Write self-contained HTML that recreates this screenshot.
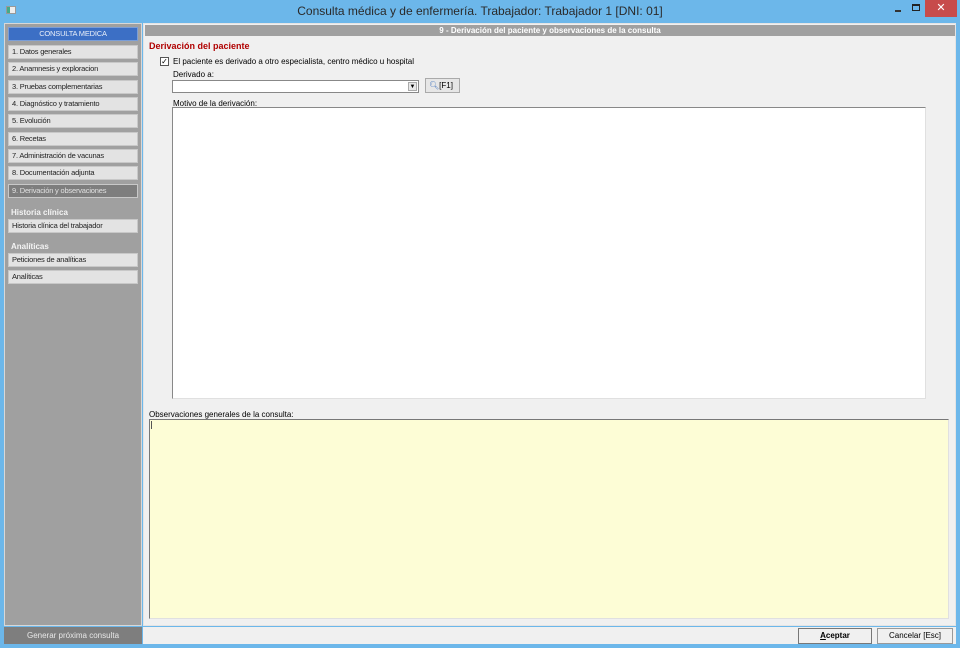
<!DOCTYPE html>
<html><head><meta charset="utf-8"><style>
*{margin:0;padding:0;box-sizing:border-box}
body{width:960px;height:648px;background:#6cb7ea;position:relative;overflow:hidden;font-family:"Liberation Sans",sans-serif;font-size:8px;color:#000}
.a{position:absolute}
.title{left:0;top:0;width:960px;height:22px;text-align:center;font-size:12px;line-height:22px;color:#2a2a2a}
.side{left:4px;top:23px;width:138px;height:603px;background:#a0a0a0;border:1px solid #d8d8d8}
.btn{position:absolute;left:3px;width:130px;height:14px;background:#e3e3e3;border:1px solid #c8c8c8;font-size:7.5px;line-height:12px;padding-left:3px;color:#222;letter-spacing:-0.2px}
.lbl{position:absolute;left:6px;font-size:8px;font-weight:bold;color:#f4f4f4}
.main{left:143px;top:23px;width:813px;height:603px;background:#f0f0f0;border:1px solid #e4e4e4}
</style></head><body>
<div class="a title">Consulta médica y de enfermería. Trabajador: Trabajador 1 [DNI: 01]</div>
<div class="a" style="left:6px;top:6px;width:10px;height:8px;background:#eee;border:1px solid #999"><div style="width:3px;height:6px;background:#4a8"></div></div>
<div class="a" style="left:895px;top:10px;width:6px;height:2px;background:#333"></div>
<div class="a" style="left:912px;top:4px;width:8px;height:7px;border:1px solid #222;border-top-width:2px"></div>
<div class="a" style="left:925px;top:0;width:32px;height:17px;background:#c74b4b;color:#fff;text-align:center;font-size:11px;line-height:16px">✕</div>

<div class="a side">
<div class="btn" style="top:3px;background:#3c6fc5;border-color:#7a9ed8;color:#e8eef8;text-align:center;padding:0">CONSULTA MEDICA</div>
<div class="btn" style="top:21px">1. Datos generales</div>
<div class="btn" style="top:38px">2. Anamnesis y exploracion</div>
<div class="btn" style="top:56px">3. Pruebas complementarias</div>
<div class="btn" style="top:73px">4. Diagnóstico y tratamiento</div>
<div class="btn" style="top:90px">5. Evolución</div>
<div class="btn" style="top:108px">6. Recetas</div>
<div class="btn" style="top:125px">7. Administración de vacunas</div>
<div class="btn" style="top:142px">8. Documentación adjunta</div>
<div class="btn" style="top:160px;background:#7e7e7e;border-color:#c8c8c8;color:#e0e0e0">9. Derivación y observaciones</div>
<div class="lbl" style="top:184px">Historia clínica</div>
<div class="btn" style="top:195px">Historia clínica del trabajador</div>
<div class="lbl" style="top:218px">Analíticas</div>
<div class="btn" style="top:229px">Peticiones de analíticas</div>
<div class="btn" style="top:246px">Analíticas</div>
</div>

<div class="a main">
<div class="a" style="left:1px;top:1px;width:810px;height:11px;background:#a0a0a0;color:#fff;font-weight:bold;text-align:center;font-size:8px;line-height:11px">9 - Derivación del paciente y observaciones de la consulta</div>
<div class="a" style="left:5px;top:17px;color:#b00000;font-weight:bold;font-size:9px">Derivación del paciente</div>
<div class="a" style="left:16px;top:33px;width:9px;height:9px;border:1px solid #555;background:#fff;font-size:8px;line-height:7px;text-align:center">✓</div>
<div class="a" style="left:29px;top:33px">El paciente es derivado a otro especialista, centro médico u hospital</div>
<div class="a" style="left:29px;top:46px">Derivado a:</div>
<div class="a" style="left:28px;top:56px;width:247px;height:13px;background:#fff;border:1px solid #888"><div class="a" style="right:1px;top:1px;width:9px;height:9px;background:#e8e8e8;border:1px solid #aaa;font-size:6px;line-height:8px;text-align:center">▼</div></div>
<div class="a" style="left:281px;top:54px;width:35px;height:15px;background:#e6e6e6;border:1px solid #aaa;line-height:13px;padding-left:3px"><span style="color:#4a7ac0">🔍︎</span>[F1]</div>
<div class="a" style="left:29px;top:75px">Motivo de la derivación:</div>
<div class="a" style="left:28px;top:83px;width:754px;height:292px;background:#fff;border-left:1px solid #888;border-top:1px solid #888;border-right:1px solid #e0e0e0;border-bottom:1px solid #e0e0e0"></div>
<div class="a" style="left:5px;top:386px">Observaciones generales de la consulta:</div>
<div class="a" style="left:5px;top:395px;width:800px;height:200px;background:#fdfdd6;border-left:1px solid #777;border-top:1px solid #777;border-right:1px solid #e0e0e0;border-bottom:1px solid #e0e0e0"><div class="a" style="left:1px;top:1px;width:1px;height:8px;background:#555"></div></div>
</div>
<div class="a" style="left:4px;top:627px;width:138px;height:17px;background:#7e7e7e;color:#e8e8e8;text-align:center;line-height:17px;font-size:8px">Generar próxima consulta</div>
<div class="a" style="left:143px;top:627px;width:813px;height:17px;background:#f0f0f0"></div>
<div class="a" style="left:798px;top:628px;width:74px;height:16px;background:#f0f0f0;border:1px solid #777;text-align:center;line-height:14px;font-weight:bold"><u>A</u>ceptar</div>
<div class="a" style="left:877px;top:628px;width:76px;height:16px;background:#f0f0f0;border:1px solid #999;text-align:center;line-height:14px">Cancelar [Esc]</div>
</body></html>
